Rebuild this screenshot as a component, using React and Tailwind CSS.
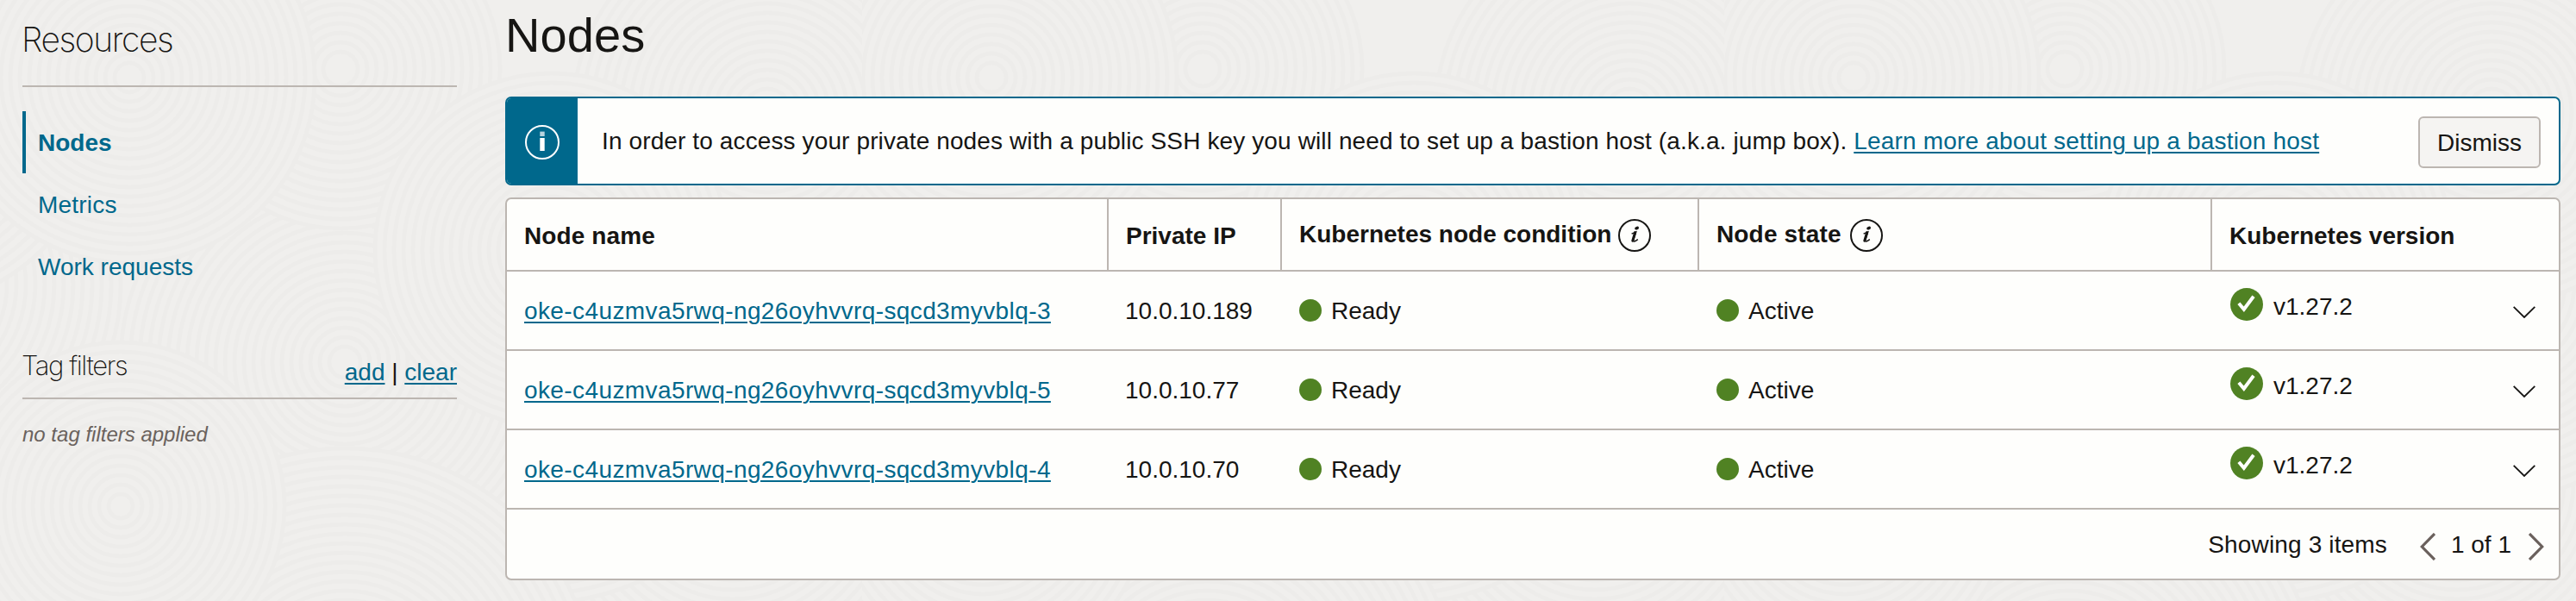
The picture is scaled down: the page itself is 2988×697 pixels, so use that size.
const NODES = [
  { name: 'oke-c4uzmva5rwq-ng26oyhvvrq-sqcd3myvblq-3', ip: '10.0.10.189' },
  { name: 'oke-c4uzmva5rwq-ng26oyhvvrq-sqcd3myvblq-5', ip: '10.0.10.77' },
  { name: 'oke-c4uzmva5rwq-ng26oyhvvrq-sqcd3myvblq-4', ip: '10.0.10.70' },
]

// Overlapping discs of rings, later ones cover earlier ones
const DISCS = [
  [850, 560, 300],
  [620, 400, 300],
  [-110, 330, 250],
  [890, 330, 250],
  [400, 420, 260],
  [890, 130, 225],
  [-110, 130, 225],
  [395, 80, 185],
  [150, 90, 215],
  [640, 290, 205],
  [400, 810, 290],
  [140, 587, 190],
]
const RING_GAP = 11

function Texture() {
  return (
    <svg className="pointer-events-none absolute inset-0 h-full w-full" aria-hidden="true">
      <defs>
        <pattern id="rings" width="1000" height="1000" patternUnits="userSpaceOnUse">
          <rect width="1000" height="1000" fill="#f0efed" />
          {DISCS.map(([x, y, r], i) => (
            <g key={i}>
              <circle cx={x} cy={y} r={r} fill="#f0efed" />
              {Array.from({ length: Math.floor(r / RING_GAP) }, (_, k) => (
                <circle
                  key={k}
                  cx={x}
                  cy={y}
                  r={r - k * RING_GAP}
                  fill="none"
                  stroke="#edecea"
                  strokeWidth="4.5"
                />
              ))}
            </g>
          ))}
        </pattern>
      </defs>
      <rect width="100%" height="100%" fill="url(#rings)" />
    </svg>
  )
}

function InfoIcon() {
  return (
    <svg className="h-[38px] w-[38px] shrink-0" viewBox="0 0 38 38" fill="none">
      <circle cx="19" cy="19" r="18" stroke="#161513" strokeWidth="2" />
      <ellipse cx="21.6" cy="10.6" rx="2.5" ry="1.8" fill="#161513" transform="rotate(-20 21.6 10.6)" />
      <path d="M15.6 17.2 L20.8 15 L17.6 25 C17.3 26.6 19 26.6 22.8 23.6" stroke="#161513" strokeWidth="1.4" />
      <path d="M19.6 15.6 L16.8 25.2" stroke="#161513" strokeWidth="3" strokeLinecap="round" />
    </svg>
  )
}

function CheckIcon() {
  return (
    <svg className="h-[38px] w-[38px] shrink-0" viewBox="0 0 38 38" fill="none">
      <circle cx="19" cy="19" r="19" fill="#508223" />
      <path d="M9.9 17.8 L15.8 24.8 L27 9.8" stroke="#fff" strokeWidth="4" />
    </svg>
  )
}

function HeaderCell({ className, children }) {
  return <div className={`flex h-full shrink-0 items-center font-bold ${className}`}>{children}</div>
}

function Status({ label }) {
  return (
    <>
      <span className="h-[26px] w-[26px] shrink-0 rounded-full bg-[#508223]" />
      <span className="ml-[11px] pt-[2px]">{label}</span>
    </>
  )
}

function Sidebar() {
  return (
    <aside className="w-[504px] shrink-0">
      <h2 className="-ml-[1px] flex h-[99px] pt-px font-['Inter',sans-serif] text-[39px] leading-[90px] font-extralight tracking-[-1.4px]">
        Resources
      </h2>
      <hr className="border-t-2 border-[#bcb6b1]" />
      <nav className="mt-[28px] flex flex-col leading-[72px] text-[#00688c]">
        <a className="h-[72px] border-l-4 border-[#00688c] pt-px pl-[14px] font-bold">Nodes</a>
        <a className="h-[72px] pt-px pl-[18px] tracking-[0.2px]">Metrics</a>
        <a className="h-[72px] pt-px pl-[18px]">Work requests</a>
      </nav>
      <div className="mt-[48px] flex h-[70px] items-end justify-between border-b-2 border-[#bcb6b1] leading-[60px]">
        <h3 className="mb-[7px] -ml-[1px] font-['Inter',sans-serif] text-[31px] font-extralight tracking-[-1.4px]">
          Tag filters
        </h3>
        <div className="-mb-px">
          <a className="text-[#00688c] underline decoration-2 underline-offset-[3px]">add</a>
          {' | '}
          <a className="text-[#00688c] underline decoration-2 underline-offset-[3px]">clear</a>
        </div>
      </div>
      <p className="mt-[21px] text-[24px] leading-[40px] text-[#6a625d] italic">no tag filters applied</p>
    </aside>
  )
}

function Banner() {
  return (
    <div className="mt-[32px] flex h-[103px] items-center overflow-hidden rounded-[7px] border-2 border-[#00688c] bg-[#fefefc]">
      <div className="flex h-full w-[82px] shrink-0 items-center bg-[#00688c] pt-[3px] pl-[21px]">
        <svg className="h-[40px] w-[40px]" viewBox="0 0 40 40" fill="none">
          <circle cx="20" cy="20" r="19" stroke="#fff" strokeWidth="2" />
          <rect x="17.3" y="7.6" width="5.4" height="5.4" fill="#b8d3de" />
          <rect x="17.3" y="15" width="5.4" height="15" fill="#fff" />
        </svg>
      </div>
      <p className="ml-[28px] tracking-[0.12px] whitespace-nowrap">
        In order to access your private nodes with a public SSH key you will need to set up a bastion host (a.k.a. jump
        box).{' '}
        <a className="tracking-[0.18px] text-[#00688c] underline decoration-2 underline-offset-[3px]">
          Learn more about setting up a bastion host
        </a>
      </p>
      <button className="mt-[3px] mr-[21px] ml-auto h-[60px] w-[142px] rounded-[6px] border-2 border-[#bcb6b1] bg-[#f5f4f2] pt-px">
        Dismiss
      </button>
    </div>
  )
}

function NodeTable() {
  return (
    <div className="mt-[14px] h-[444px] overflow-hidden rounded-[7px] border-2 border-[#bcb6b1] bg-[#fefefc]">
      <div className="flex h-[84px] items-center border-b-2 border-[#bcb6b1]">
        <HeaderCell className="w-[698px] border-r-2 border-[#bcb6b1] pt-[3px] pl-[20px] tracking-[0.1px]">
          Node name
        </HeaderCell>
        <HeaderCell className="w-[201px] border-r-2 border-[#bcb6b1] pt-[3px] pl-[20px]">Private IP</HeaderCell>
        <HeaderCell className="w-[484px] border-r-2 border-[#bcb6b1] pl-[20px]">
          Kubernetes node condition
          <span className="mt-[2px] ml-[8px]">
            <InfoIcon />
          </span>
        </HeaderCell>
        <HeaderCell className="w-[595px] border-r-2 border-[#bcb6b1] pl-[20px]">
          <span className="tracking-[0.15px]">Node state</span>
          <span className="mt-[2px] ml-[10px]">
            <InfoIcon />
          </span>
        </HeaderCell>
        <HeaderCell className="pt-[3px] pl-[20px]">Kubernetes version</HeaderCell>
      </div>
      {NODES.map((node) => (
        <div key={node.name} className="flex h-[92px] items-center border-b-2 border-[#bcb6b1]">
          <div className="w-[698px] shrink-0 pt-[2px] pl-[20px]">
            <a className="tracking-[0.4px] text-[#00688c] underline decoration-2 underline-offset-[3px]">{node.name}</a>
          </div>
          <div className="w-[201px] shrink-0 pt-[2px] pl-[19px]">{node.ip}</div>
          <div className="flex w-[484px] shrink-0 items-center pl-[20px]">
            <Status label="Ready" />
          </div>
          <div className="flex w-[595px] shrink-0 items-center pl-[20px]">
            <Status label="Active" />
          </div>
          <div className="flex flex-1 items-center pl-[21px]">
            <span className="mb-[14px]">
              <CheckIcon />
            </span>
            <span className="mb-[8px] ml-[12px]">v1.27.2</span>
            <svg className="mt-[4px] mr-[27px] ml-auto h-[14px] w-[26px]" viewBox="0 0 26 14" fill="none">
              <path d="M0.7 0.8 L13 13 L25.3 0.8" stroke="#161513" strokeWidth="1.8" />
            </svg>
          </div>
        </div>
      ))}
      <div className="flex h-[80px] items-center justify-end pr-[17px]">
        <span className="pt-px tracking-[0.15px]">Showing 3 items</span>
        <svg className="mt-[6px] ml-[38px] h-[32px] w-[18px]" viewBox="0 0 18 32" fill="none">
          <path d="M17 1 L2.3 16 L17 31" stroke="#6a605c" strokeWidth="3.2" />
        </svg>
        <span className="ml-[18px] pt-px">1 of 1</span>
        <svg className="mt-[6px] ml-[20px] h-[32px] w-[18px]" viewBox="0 0 18 32" fill="none">
          <path d="M1 1 L15.7 16 L1 31" stroke="#6a605c" strokeWidth="3.2" />
        </svg>
      </div>
    </div>
  )
}

export default function App() {
  return (
    <div className="relative h-[697px] w-[2988px] overflow-hidden bg-[#f0efed] font-['Liberation_Sans',Arial,sans-serif] text-[28px] leading-[40px] text-[#161513]">
      <Texture />
      <div className="relative flex gap-[56px] pr-[18px] pl-[26px]">
        <Sidebar />
        <main className="min-w-0 flex-1">
          <h1 className="h-[80px] pt-px text-[56px] leading-[80px] tracking-[0.1px]">Nodes</h1>
          <Banner />
          <NodeTable />
        </main>
      </div>
    </div>
  )
}
